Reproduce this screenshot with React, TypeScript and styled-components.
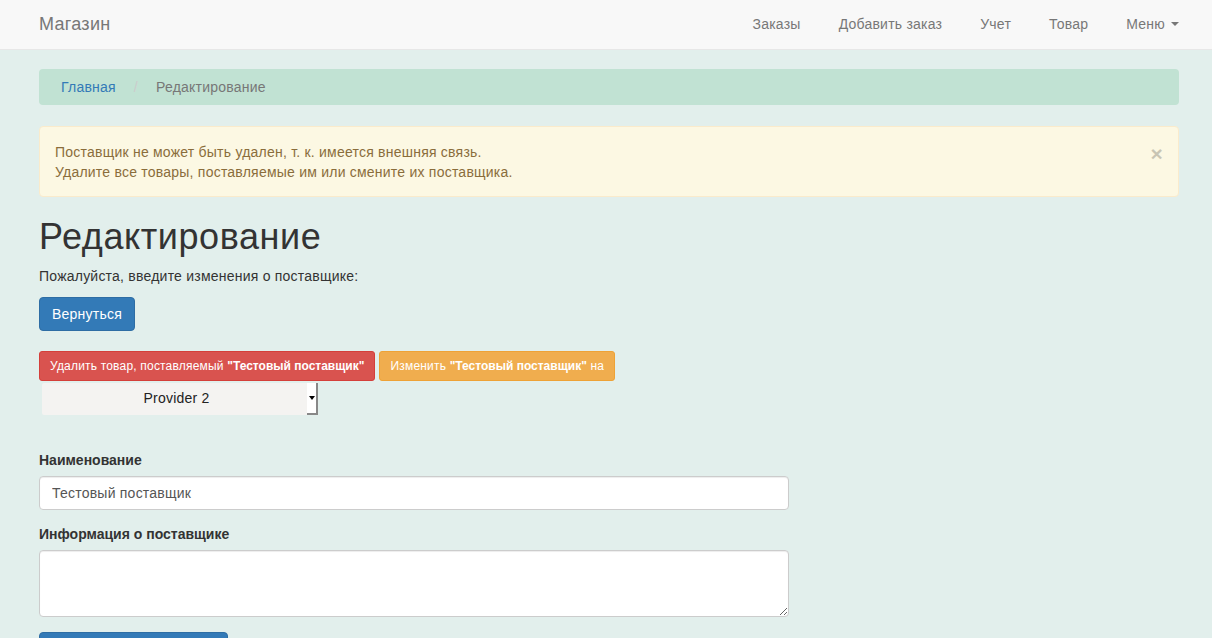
import React from "react";
import styled, { createGlobalStyle } from "styled-components";

const Global = createGlobalStyle`
  * { box-sizing: border-box; letter-spacing: 0.016em; }
  b, strong, label { letter-spacing: 0; }
  html, body { margin: 0; padding: 0; }
  body {
    background: #e2efec;
    font-family: "Liberation Sans", Arial, sans-serif;
    font-size: 14px;
    line-height: 1.42857;
    color: #333;
  }
`;

const Navbar = styled.nav`
  height: 50px;
  background: #f8f8f8;
  border-bottom: 1px solid #e7e7e7;
`;

const NavInner = styled.div`
  width: 1140px;
  margin-left: 39px;
  height: 49px;
  display: flex;
  align-items: center;
  justify-content: space-between;
`;

const Brand = styled.a`
  font-size: 18px;
  color: #777;
  text-decoration: none;
`;

const NavList = styled.ul`
  list-style: none;
  margin: 0;
  padding: 0;
  display: flex;
  gap: 38px;
  align-items: center;
`;

const NavLink = styled.a`
  color: #777;
  font-size: 14px;
  text-decoration: none;
  display: flex;
  align-items: center;
`;

const Caret = styled.span`
  display: inline-block;
  width: 0;
  height: 0;
  margin-left: 6px;
  border-top: 4px solid #777;
  border-left: 4px solid transparent;
  border-right: 4px solid transparent;
`;

const Container = styled.main`
  width: 1140px;
  margin: 19px 0 0 39px;
`;

const Breadcrumb = styled.ol`
  list-style: none;
  margin: 0 0 21px;
  padding: 9px 22px 7px;
  height: 36px;
  background: #c1e2d3;
  border-radius: 4px;
  display: flex;
  align-items: center;
`;

const Crumb = styled.li<{ $active?: boolean }>`
  color: ${(p) => (p.$active ? "#777" : "#337ab7")};
`;

const Separator = styled.li`
  color: #ccc;
  padding: 0 18px;
`;

const Alert = styled.div`
  position: relative;
  background: #fcf8e3;
  border: 1px solid #faebcc;
  border-radius: 4px;
  color: #8a6d3b;
  padding: 16px 35px 14px 15px;
  margin-bottom: 20px;
  height: 71px;
`;

const Close = styled.span`
  position: absolute;
  right: 15px;
  top: 16px;
  font-size: 21px;
  font-weight: bold;
  line-height: 1;
  color: #000;
  opacity: 0.2;
`;

const Title = styled.h1`
  font-size: 36px;
  font-weight: 500;
  line-height: 1.1;
  margin: 20px 0 10px;
  color: #333;
`;

const Lead = styled.p`
  margin: 0 0 10px;
`;

const Btn = styled.button<{ $variant: "primary" | "danger" | "warning"; $sm?: boolean }>`
  font-family: inherit;
  display: inline-block;
  border-radius: ${(p) => (p.$sm ? "3px" : "4px")};
  font-size: ${(p) => (p.$sm ? "12px" : "14px")};
  line-height: ${(p) => (p.$sm ? "18px" : "20px")};
  padding: ${(p) => (p.$sm ? "5px 10px" : "6px 12px")};
  color: #fff;
  cursor: pointer;
  background: ${(p) =>
    p.$variant === "primary" ? "#337ab7" : p.$variant === "danger" ? "#d9534f" : "#f0ad4e"};
  border: 1px solid
    ${(p) =>
      p.$variant === "primary" ? "#2e6da4" : p.$variant === "danger" ? "#d43f3a" : "#eea236"};
  b { font-weight: bold; letter-spacing: 0; }
`;

const ActionRow = styled.div`
  margin-top: 20px;
  display: flex;
  gap: 4px;
`;

const SelectBox = styled.div`
  margin: 2px 0 0 3px;
  width: 276px;
  height: 32px;
  display: flex;
`;

const SelectValue = styled.div`
  flex: 1;
  background: #f4f3f1;
  display: flex;
  align-items: center;
  justify-content: center;
  font-size: 14px;
  color: #222;
  padding-left: 4px;
  border-radius: 2px 0 0 2px;
`;

const SelectArrow = styled.div`
  width: 11px;
  background: #fff;
  border-right: 2px solid #888;
  border-bottom: 2px solid #888;
  display: flex;
  align-items: center;
  justify-content: center;
  &::after {
    content: "";
    border-top: 4px solid #000;
    border-left: 3px solid transparent;
    border-right: 3px solid transparent;
  }
`;

const Form = styled.form`
  margin-top: 36px;
`;

const Group = styled.div`
  margin-bottom: 15px;
`;

const Label = styled.label`
  display: block;
  font-weight: bold;
  margin-bottom: 5px;
`;

const Input = styled.input`
  display: block;
  width: 750px;
  height: 34px;
  padding: 6px 12px;
  font-family: inherit;
  font-size: 14px;
  color: #555;
  background: #fff;
  border: 1px solid #ccc;
  border-radius: 4px;
  box-shadow: inset 0 1px 1px rgba(0, 0, 0, 0.075);
`;

const TextArea = styled.textarea`
  display: block;
  width: 750px;
  height: 67px;
  padding: 6px 12px;
  font-family: inherit;
  font-size: 14px;
  color: #555;
  background: #fff;
  border: 1px solid #ccc;
  border-radius: 4px;
  box-shadow: inset 0 1px 1px rgba(0, 0, 0, 0.075);
`;

const SubmitBtn = styled(Btn)`
  width: 189px;
  height: 34px;
`;

export default function App() {
  return (
    <>
      <Global />
      <Navbar>
        <NavInner>
          <Brand>Магазин</Brand>
          <NavList>
            <li><NavLink>Заказы</NavLink></li>
            <li><NavLink>Добавить заказ</NavLink></li>
            <li><NavLink>Учет</NavLink></li>
            <li><NavLink>Товар</NavLink></li>
            <li><NavLink>Меню<Caret /></NavLink></li>
          </NavList>
        </NavInner>
      </Navbar>
      <Container>
        <Breadcrumb>
          <Crumb>Главная</Crumb>
          <Separator aria-hidden>/</Separator>
          <Crumb $active>Редактирование</Crumb>
        </Breadcrumb>
        <Alert>
          <Close>×</Close>
          Поставщик не может быть удален, т. к. имеется внешняя связь.
          <br />
          Удалите все товары, поставляемые им или смените их поставщика.
        </Alert>
        <Title>Редактирование</Title>
        <Lead>Пожалуйста, введите изменения о поставщике:</Lead>
        <Btn $variant="primary">Вернуться</Btn>
        <ActionRow>
          <Btn $variant="danger" $sm>
            Удалить товар, поставляемый <b>"Тестовый поставщик"</b>
          </Btn>
          <Btn $variant="warning" $sm>
            Изменить <b>"Тестовый поставщик"</b> на
          </Btn>
        </ActionRow>
        <SelectBox>
          <SelectValue>Provider 2</SelectValue>
          <SelectArrow />
        </SelectBox>
        <Form>
          <Group>
            <Label>Наименование</Label>
            <Input defaultValue="Тестовый поставщик" />
          </Group>
          <Group>
            <Label>Информация о поставщике</Label>
            <TextArea />
          </Group>
          <SubmitBtn $variant="primary" type="button">Сохранить</SubmitBtn>
        </Form>
      </Container>
    </>
  );
}
